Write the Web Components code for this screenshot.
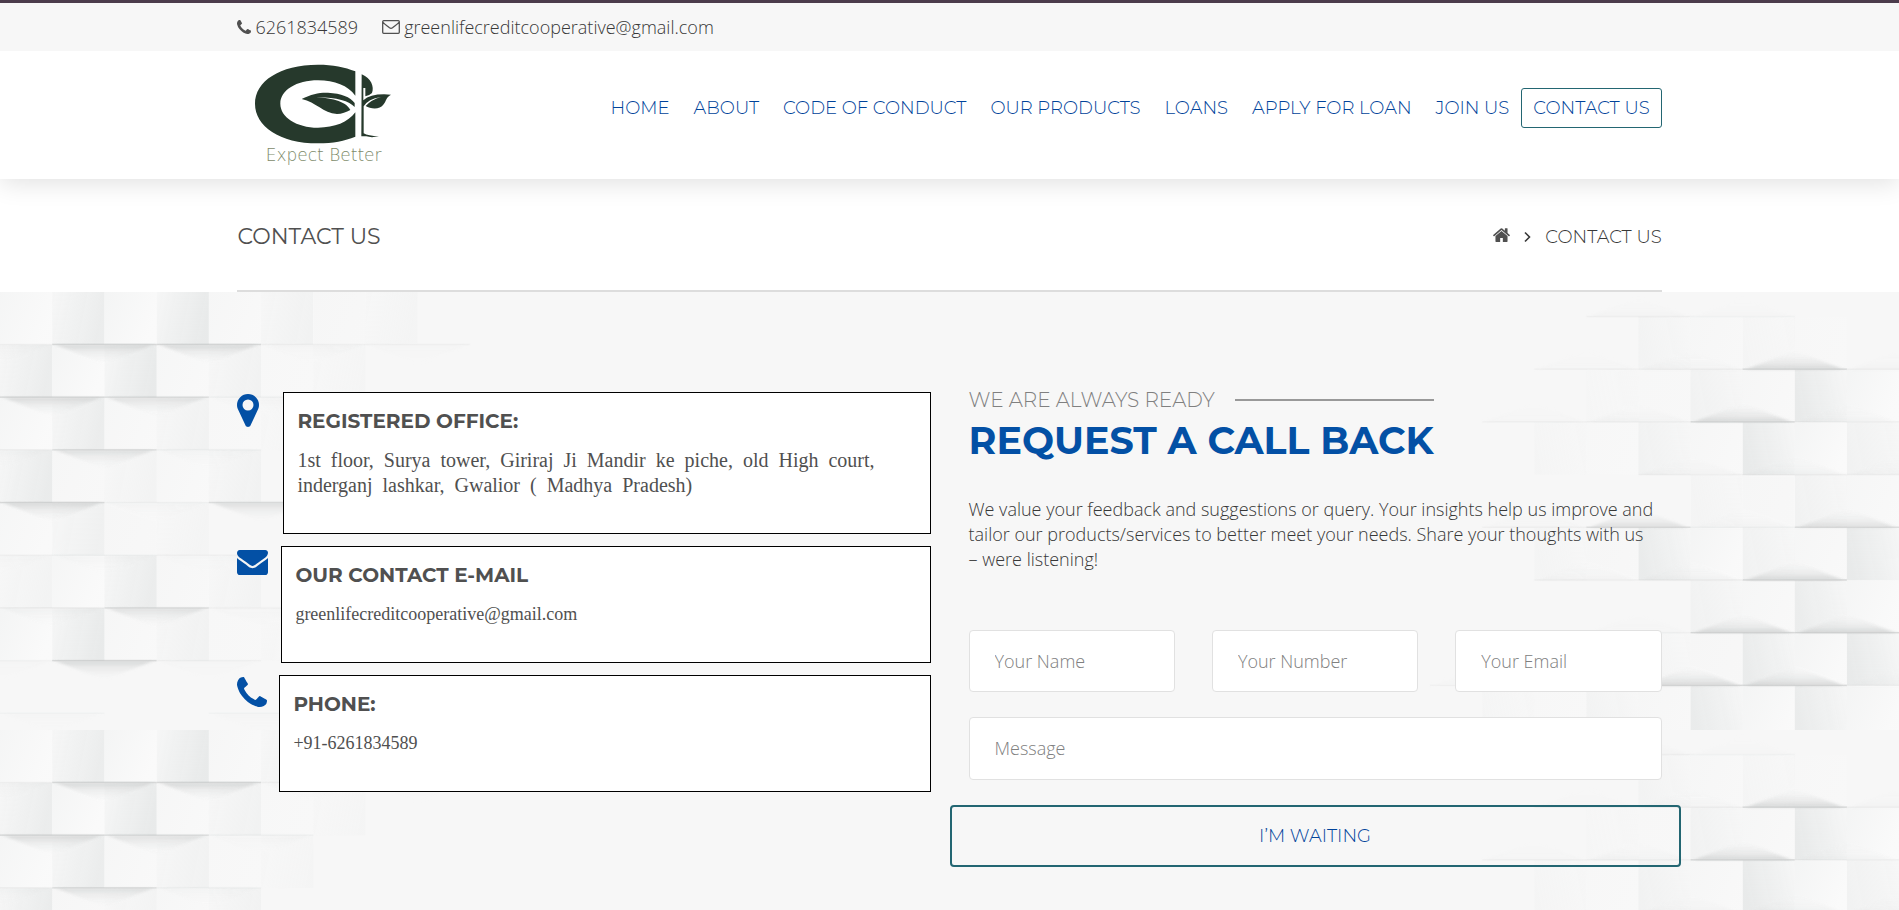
<!DOCTYPE html>
<html lang="en">
<head>
<meta charset="utf-8">
<title>Contact Us</title>
<style>
html, body { margin: 0; }
body {
  --blue: #0350a5;
  --nav: #00439a;
  --teal: #236672;
  --ink: #505050;
  --body-ink: #383838;
  --muted: #999;
  --side: 12.5%;
  --display: Montserrat, Inter, sans-serif;
  --serif: "Liberation Serif", serif;
  min-height: 100vh;
  display: flex;
  flex-direction: column;
  background: #fff;
  color: var(--body-ink);
  font: 300 18px/25px "Open Sans", sans-serif;
}
</style>
</head>
<body>
<top-bar></top-bar>
<site-header></site-header>
<page-banner>Contact us</page-banner>
<tiled-section>
  <contact-list slot="left">
    <contact-card icon="pin">
      <span slot="title">Registered Office:</span>1st&nbsp; floor,&nbsp; Surya&nbsp; tower,&nbsp; Giriraj&nbsp; Ji&nbsp; Mandir&nbsp; ke&nbsp; piche,&nbsp; old&nbsp; High&nbsp; court,&nbsp; inderganj&nbsp; lashkar,&nbsp; Gwalior&nbsp; (&nbsp; Madhya&nbsp; Pradesh)</contact-card>
    <contact-card icon="mail"><span slot="title">Our contact E-mail</span>greenlifecreditcooperative@gmail.com</contact-card>
    <contact-card icon="phone"><span slot="title">Phone:</span>+91-6261834589</contact-card>
  </contact-list>
  <callback-form slot="right"></callback-form>
</tiled-section>

<script>
const ICONS = {
  phone: ['0 0 1408 1408', '<path d="M1408 1112q0 27-10 70.5t-21 68.5q-21 50-122 106-94 51-186 51-27 0-53-3.5t-57.5-12.5-47-14.5-55.5-20.5-49-18q-98-35-175-83-127-79-264-216t-216-264q-48-77-83-175-3-9-18-49t-20.5-55.5-14.5-47-12.5-57.5-3.5-53q0-92 51-186 56-101 106-122 25-11 68.5-21t70.5-10q14 0 21 3 18 6 53 76 11 19 30 54t35 63.5 31 53.5q3 4 17.5 25t21.5 35.5 7 28.5q0 20-28.5 50t-62 55-62 53-28.5 46q0 9 5 22.5t8.5 20.5 14 24 11.5 19q76 137 174 235t235 174q2 1 19 11.5t24 14 20.5 8.5 22.5 5q18 0 46-28.5t53-62 55-62 50-28.5q14 0 28.5 7t35.5 21.5 25 17.5q25 15 53.5 31t63.5 35 54 30q70 35 76 53 3 7 3 21z"/>'],
  pin: ['384 128 1024 1536', '<path d="M1152 640q0-106-75-181t-181-75-181 75-75 181 75 181 181 75 181-75 75-181zm256 0q0 109-33 179l-364 774q-16 33-47.5 52t-67.5 19-67.5-19-46.5-52l-365-774q-33-70-33-179 0-212 150-362t362-150 362 150 150 362z"/>'],
  mail: ['0 256 1792 1408', '<path d="M1792 710v794q0 66-47 113t-113 47h-1472q-66 0-113-47t-47-113v-794q44 49 101 87 362 246 497 345 57 42 92.5 65.5t94.5 48 110 24.5h2q51 0 110-24.5t94.5-48 92.5-65.5q170-123 498-345 57-39 100-87zm0-294q0 79-49 151t-122 123q-376 261-468 325-10 7-42.5 31t-54 38.5-52 32.5-57.5 27-50 9h-2q-23 0-50-9t-57.5-27-52-32.5-54-38.5-42.5-31q-91-64-262-182.5t-205-142.5q-62-42-117-115.5t-55-136.5q0-78 41.5-130t118.5-52h1472q65 0 112.5 47t47.5 113z"/>'],
  mailOutline: ['0 0 18 14', '<path fill="none" stroke="currentColor" stroke-width="1.3" d="M1.7.7h14.6q1 0 1 1v10.6q0 1-1 1H1.700q-1 0-1-1V1.700q0-1 1-1zM.8 2.200c2 2.400 4.700 3.800 6.700 5.500q1.500 1.200 3 0c2-1.700 4.700-3.100 6.700-5.500"/>'],
  home: ['85 230 1622 1306', '<path d="M1472 992v480q0 26-19 45t-45 19h-384v-384h-256v384h-384q-26 0-45-19t-19-45v-480q0-1 .5-3t.5-3l575-474 575 474q1 2 1 6zm223-69l-62 74q-8 9-21 11h-3q-13 0-21-7l-692-577-692 577q-12 8-24 7-13-2-21-11l-62-74q-8-10-7-23.5t11-21.5l719-599q32-26 76-26t76 26l244 204v-195q0-14 9-23t23-9h192q14 0 23 9t9 23v408l219 182q10 8 11 21.5t-7 23.5z"/>'],
  chevron: ['0 0 7 12', '<path fill="none" stroke="currentColor" stroke-width="1.6" d="M1 1.500l4.500 4.500L1 10.500"/>']
};

const icon = (name, width, height) =>
  `<svg width="${width}" height="${height}" viewBox="${ICONS[name][0]}" preserveAspectRatio="none" fill="currentColor" aria-hidden="true">${ICONS[name][1]}</svg>`;

class Base extends HTMLElement {
  constructor() {
    super();
    this.attachShadow({ mode: 'open' });
  }
  connectedCallback() {
    this.shadowRoot.innerHTML = this.render();
  }
}

customElements.define('top-bar', class extends Base {
  render() {
    return `
      <style>
        :host { display: flex; align-items: center; gap: 24px; height: 48px; padding: 0 var(--side); border-top: 3px solid #4c3c4c; background: #f7f7f7; position: relative; z-index: 2; }
        a { display: flex; align-items: center; gap: 4px; color: inherit; text-decoration: none; }
        svg { color: var(--ink); }
      </style>
      <a href="tel:6261834589">${icon('phone', 14, 14)}6261834589</a>
      <a href="mailto:greenlifecreditcooperative@gmail.com">${icon('mailOutline', 18, 14)}greenlifecreditcooperative@gmail.com</a>`;
  }
});

customElements.define('site-logo', class extends Base {
  render() {
    return `
      <style>
        :host { display: block; }
        a, svg { display: block; }
      </style>
      <a href="#" aria-label="Green Life">
        <svg width="142" height="106" viewBox="100 190 426 318">
          <g fill="#26392c">
            <path d="M407 215C375 202 340 195 295 195C180 195 106 245 106 312C106 380 180 431 295 431C340 431 375 424 407 411V338C385 368 345 384 295 384C230 384 182 352 182 312C182 272 230 242 295 242C345 242 385 258 407 288Z"/>
            <path d="M246 298C275 283 300 278 325 279C365 281 392 292 405 310V322C388 303 345 291 281 293C330 294 378 303 392 331C380 338 366 343 352 343C310 340 290 308 246 298Z"/>
            <path d="M426 224C455 236 464 262 457 280Q450 287 437 290V265H431V302Q455 280 514 285C500 292 500 303 492 314C480 332 452 328 438 319Q455 300 484 292Q445 298 432 320V401Q445 409 478 410Q455 415 440 410H425Z"/>
          </g>
          <text x="138" y="484" font-family="DejaVu Sans, sans-serif" font-weight="200" font-size="51" fill="#7d8a6a">Expect Better</text>
        </svg>
      </a>`;
  }
});

customElements.define('site-header', class extends Base {
  render() {
    const items = ['Home', 'About', 'Code of conduct', 'Our products', 'Loans', 'Apply for loan', 'Join us', 'Contact us'];
    return `
      <style>
        :host { display: flex; justify-content: space-between; align-items: flex-start; height: 128px; padding: 0 var(--side); box-sizing: border-box; background: #fff; box-shadow: 0 4px 24px rgba(0, 0, 0, .12); position: relative; z-index: 1; }
        site-logo { margin: 12px 0 0 16px; }
        nav { display: flex; margin-top: 37px; font: 300 18px/38px var(--display); text-transform: uppercase; }
        a { padding: 0 11px; border: 1px solid transparent; border-radius: 3px; color: var(--nav); text-decoration: none; white-space: nowrap; }
        a[aria-current] { border-color: var(--teal); }
      </style>
      <site-logo></site-logo>
      <nav>${items.map((t, i) => `<a href="#"${i === 7 ? ' aria-current="page"' : ''}>${t}</a>`).join('')}</nav>`;
  }
});

customElements.define('page-banner', class extends Base {
  render() {
    return `
      <style>
        :host { display: block; padding: 0 var(--side); font: 300 18px/25px var(--display); text-transform: uppercase; }
        div { display: flex; justify-content: space-between; align-items: center; padding: 42px 0 37px; border-bottom: 2px solid #ddd; }
        h1 { margin: 0; font: 400 22px/32px var(--display); color: var(--ink); }
        nav { display: flex; align-items: center; gap: 14px; }
        a { display: flex; padding-bottom: 5px; color: var(--ink); }
      </style>
      <div>
        <h1><slot></slot></h1>
        <nav aria-label="Breadcrumb"><a href="#" aria-label="Home">${icon('home', 17, 14)}</a>${icon('chevron', 7, 12)}<span>Contact us</span></nav>
      </div>`;
  }
});

/* Relief wall of offset bricks; one image per page side, repeated downwards. */
const ROW = 52.7, HALF = 52.15, WALL_W = 521.5, WALL_H = 438;
function wall(faces, shadows, offsetY, flip) {
  const brick = ([row, col, a]) => {
    const x = col * HALF, y = row * ROW + offsetY;
    const lit = flip ? x + HALF : x - HALF;
    return `<rect x="${x}" y="${y}" width="${HALF}" height="${ROW}" fill="url(#d)" opacity="${a * .85}"/>
      <rect x="${lit}" y="${y}" width="${HALF}" height="${ROW}" fill="url(#l)" opacity="${a * .9}"/>`;
  };
  const shade = ([row, col, a]) => {
    const x = col * HALF, y = row * ROW + offsetY, s = flip ? -1 : 1, k = a * a;
    return `<path d="M${x + 3} ${y}h${HALF * 2 - 6}Q${x + HALF * 1.5} ${y + s * 9} ${x + HALF} ${y + s * 19}Q${x + HALF * .5} ${y + s * 9} ${x + 3} ${y}z" fill="url(#s)" filter="url(#b)" opacity="${k * .9 + .04}"/>
      <rect x="${x}" y="${y - 1}" width="${HALF * 2}" height="1.500" fill="#c0c3c3" opacity="${k * .6 + .1}"/>`;
  };
  const dir = flip ? 'x1="1" x2="0" y1="0" y2=".2"' : 'x1="0" x2="1" y1="0" y2=".2"';
  const svg = `<svg xmlns="http://www.w3.org/2000/svg" width="${WALL_W}" height="${WALL_H}"><defs>
    <filter id="b" x="-.1" y="-.3" width="1.2" height="1.6"><feGaussianBlur stdDeviation="2 1"/></filter>
    <linearGradient id="d" ${dir}><stop offset="0" stop-color="#eef0f0" stop-opacity=".2"/><stop offset=".4" stop-color="#ebeded" stop-opacity=".7"/><stop offset="1" stop-color="#e6e8e8"/></linearGradient>
    <linearGradient id="l" x1="0" y1="0" x2="1" y2=".4"><stop offset="0" stop-color="#f4f5f5"/><stop offset="1" stop-color="#fbfbfb"/></linearGradient>
    <linearGradient id="s" x1="0" x2="0" y1="${flip ? 1 : 0}" y2="${flip ? 0 : 1}"><stop offset="0" stop-color="#cccece"/><stop offset=".3" stop-color="#dfe0e0" stop-opacity=".8"/><stop offset="1" stop-color="#f0f1f1" stop-opacity="0"/></linearGradient>
    </defs>${faces.map(brick).join('')}${shadows.map(shade).join('')}</svg>`;
  return `url("data:image/svg+xml,${encodeURIComponent(svg)}")`;
}

const leftWall = wall(
  [[0,1,.8],[0,3,1],[0,5,.4],[0,7,.2],[1,0,.8],[1,2,1],[1,4,.4],[1,6,.15],[2,1,.8],[2,3,.4],[2,5,.15],[3,0,.9],[3,2,.3],[3,4,.4],[4,1,.5],[4,3,.2],[5,0,.3],[5,2,.8],[5,4,.3],[6,1,1],[6,3,.4],[6,5,.1]],
  [[1,1,.9],[1,3,.9],[1,5,.3],[1,7,.2],[1,-1,.3],[2,0,.9],[2,2,.8],[2,4,.25],[3,1,.8],[3,3,.25],[3,-1,.3],[4,0,.9],[4,2,.25],[4,4,.8],[5,1,.25],[5,-1,.2],[5,3,.15],[6,2,.8],[6,0,.4],[6,4,.2],[7,1,.9],[7,3,.2],[7,-1,.2],[8,0,.1],[8,4,.1]],
  0, false);
const rightWall = wall(
  [[1,5,.3],[1,7,.15],[2,8,1],[2,6,.4],[2,4,.1],[3,7,1],[3,5,.4],[3,9,.4],[3,3,.15],[4,8,.4],[4,6,.2],[5,5,.9],[5,7,.4],[5,9,1],[5,3,.2],[6,8,.8],[6,6,.4],[7,7,.9],[7,9,1],[7,5,.2],[8,6,.9],[8,8,.9],[8,4,.3],[8,2,.15]],
  [[1,4,.3],[1,6,.1],[2,7,.9],[2,5,.3],[2,3,.2],[2,9,.3],[3,6,.9],[3,4,.3],[3,8,.3],[3,2,.2],[4,7,.4],[4,5,.3],[4,9,.3],[5,4,.8],[5,8,.8],[5,6,.25],[5,2,.2],[6,7,.9],[6,5,.4],[6,3,.3],[7,6,.9],[7,8,.9],[7,4,.2],[8,5,.9],[8,7,.9],[8,9,.3],[8,1,.15]],
  -28, true);

customElements.define('tiled-section', class extends Base {
  render() {
    return `
      <style>
        :host { flex: 1; display: grid; grid-template-columns: 1fr 1fr; gap: 38px; align-items: start; padding: 92px var(--side) 40px; background: ${leftWall} left top repeat-y, ${rightWall} right top repeat-y, #f7f7f7; }
        slot { display: block; min-width: 0; }
      </style>
      <slot name="left"></slot>
      <slot name="right"></slot>`;
  }
});

customElements.define('contact-list', class extends Base {
  render() {
    return `
      <style>
        :host { display: flex; flex-direction: column; gap: 12px; padding-top: 8px; }
      </style>
      <slot></slot>`;
  }
});

customElements.define('contact-card', class extends Base {
  render() {
    const [name, width, height, column, size, top] = {
      pin: ['pin', 22, 33, 46, 20, 2],
      mail: ['mail', 31, 25, 44, 18, 4],
      phone: ['phone', 30, 30, 42, 18, 2]
    }[this.getAttribute('icon')];
    return `
      <style>
        :host { display: grid; grid-template-columns: ${column}px 1fr; color: var(--ink); }
        svg { margin-top: ${top}px; color: var(--blue); }
        article { padding: 14px 13px 35px; border: 1px solid #000; background: #fff; }
        h3 { margin: 0 0 13px; font: 700 20px/28px var(--display); text-transform: uppercase; }
        p { margin: 0; font: 400 ${size}px/25px var(--serif); }
      </style>
      ${icon(name, width, height)}
      <article><h3><slot name="title"></slot></h3><p><slot></slot></p></article>`;
  }
});

customElements.define('callback-form', class extends Base {
  render() {
    return `
      <style>
        :host { display: block; }
        header { width: fit-content; }
        .eyebrow { display: flex; align-items: center; gap: 20px; margin: 0; font: 300 20px/32px var(--display); color: #808080; text-transform: uppercase; }
        .eyebrow::after { content: ""; flex: 1; height: 2px; background: var(--muted); }
        h2 { margin: 0; font: 700 38px/50px var(--display); color: var(--blue); text-transform: uppercase; white-space: nowrap; }
        .intro { margin: 31px 0 58px; }
        .together { white-space: nowrap; }
        form { display: grid; grid-template-columns: repeat(3, 1fr); gap: 25px 37px; }
        input, textarea { box-sizing: border-box; width: 100%; min-width: 0; height: 62px; padding: 0 25px; border: 1px solid #e1e1e1; border-radius: 4px; background: #fff; color: inherit; font: 300 18px/25px "Open Sans", sans-serif; resize: none; display: block; }
        textarea { grid-column: 1 / -1; height: 63px; padding: 18px 25px; overflow: hidden; }
        ::placeholder { color: #808080; opacity: 1; }
        button { grid-column: 1 / -1; margin: 0 -19px; height: 62px; border: 2px solid var(--teal); border-radius: 4px; background: transparent; color: var(--nav); font: 300 18px/25px var(--display); text-transform: uppercase; }
      </style>
      <header>
        <p class="eyebrow">We are always ready</p>
        <h2>Request a call back</h2>
      </header>
      <p class="intro">We value your feedback and suggestions or query. Your insights help us improve and tailor our products/services to better meet your needs. Share your thoughts with us <span class="together">– were listening!</span></p>
      <form>
        <input type="text" aria-label="Your Name" placeholder="Your Name">
        <input type="tel" aria-label="Your Number" placeholder="Your Number">
        <input type="email" aria-label="Your Email" placeholder="Your Email">
        <textarea aria-label="Message" placeholder="Message"></textarea>
        <button type="button">I’m waiting</button>
      </form>`;
  }
});
</script>
</body>
</html>
